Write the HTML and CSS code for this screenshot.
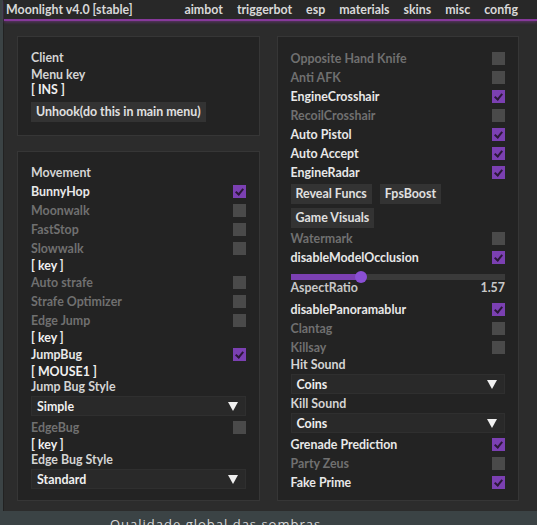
FILE: index.html
```html
<!DOCTYPE html>
<html>
<head>
<title>Moonlight</title>
<link rel="stylesheet" href="styles.css">
</head>
<body>
<div class="window">
    <div class="titlebar">
        <span class="title">Moonlight v4.0 [stable]</span>
        <nav class="tabs">
            <span>aimbot</span>
            <span>triggerbot</span>
            <span>esp</span>
            <span>materials</span>
            <span>skins</span>
            <span>misc</span>
            <span>config</span>
        </nav>
    </div>

    <div class="content">
        <div class="column">
            <div class="panel client">
                <div class="head">Client</div>
                <div class="line">Menu key</div>
                <div class="line key">[ INS ]</div>
                <div class="btnrow unhook"><span class="btn">Unhook(do this in main menu)</span></div>
            </div>

            <div class="panel movement">
                <div class="head">Movement</div>
                <div class="row on">BunnyHop<i class="box checked"></i></div>
                <div class="row">Moonwalk<i class="box"></i></div>
                <div class="row">FastStop<i class="box"></i></div>
                <div class="row">Slowwalk<i class="box"></i></div>
                <div class="line key">[ key ]</div>
                <div class="row">Auto strafe<i class="box"></i></div>
                <div class="row">Strafe Optimizer<i class="box"></i></div>
                <div class="row">Edge Jump<i class="box"></i></div>
                <div class="line key">[ key ]</div>
                <div class="row on">JumpBug<i class="box checked"></i></div>
                <div class="line key">[ MOUSE1 ]</div>
                <div class="line">Jump Bug Style</div>
                <div class="select">Simple<b class="arrow"></b></div>
                <div class="row">EdgeBug<i class="box"></i></div>
                <div class="line key">[ key ]</div>
                <div class="line">Edge Bug Style</div>
                <div class="select">Standard<b class="arrow"></b></div>
            </div>
        </div>

        <div class="column">
            <div class="panel misc">
                <div class="row">Opposite Hand Knife<i class="box"></i></div>
                <div class="row">Anti AFK<i class="box"></i></div>
                <div class="row on">EngineCrosshair<i class="box checked"></i></div>
                <div class="row">RecoilCrosshair<i class="box"></i></div>
                <div class="row on">Auto Pistol<i class="box checked"></i></div>
                <div class="row on">Auto Accept<i class="box checked"></i></div>
                <div class="row on">EngineRadar<i class="box checked"></i></div>
                <div class="btnrow first"><span class="btn">Reveal Funcs</span><span class="btn">FpsBoost</span></div>
                <div class="btnrow"><span class="btn">Game Visuals</span></div>
                <div class="row gap">Watermark<i class="box"></i></div>
                <div class="row on">disableModelOcclusion<i class="box checked"></i></div>
                <div class="slider">
                    <div class="fill" style="width: 70px"></div>
                    <div class="knob" style="left: 64px"></div>
                </div>
                <div class="line value">AspectRatio<span>1.57</span></div>
                <div class="row on after-slider">disablePanoramablur<i class="box checked"></i></div>
                <div class="row">Clantag<i class="box"></i></div>
                <div class="row">Killsay<i class="box"></i></div>
                <div class="line">Hit Sound</div>
                <div class="select">Coins<b class="arrow"></b></div>
                <div class="line">Kill Sound</div>
                <div class="select">Coins<b class="arrow"></b></div>
                <div class="row on">Grenade Prediction<i class="box checked"></i></div>
                <div class="row">Party Zeus<i class="box"></i></div>
                <div class="row on">Fake Prime<i class="box checked"></i></div>
            </div>
        </div>
    </div>
</div>
<div class="game">Qualidade global das sombras</div>
</body>
</html>
```

FILE: styles.css
```css
html, body{
    margin: 0;
    padding: 0;
}
body{
    background-color: #3b4345;
    font-family: "Lato", "Open Sans", sans-serif;
    font-size: 12.4px;
    font-weight: 700;
    color: #e4e4e4;
    width: 537px;
    height: 525px;
    overflow: hidden;
}

.window{
    margin-left: 3px;
    height: 511px;
    background-color: #2c2c2c;
    border-left: 1px solid #222;
}

.titlebar{
    height: 19px;
    display: flex;
    align-items: center;
    justify-content: space-between;
    padding: 0 19px 0 2px;
    background-color: #282828;
    border-bottom: 2px solid #86399a;
    box-shadow: 0 1px 3px rgba(150, 60, 170, 0.5);
    color: #d8d8d8;
}
.tabs{
    display: flex;
    gap: 14px;
}

.content{
    display: flex;
    gap: 17px;
    padding: 15px 18px 0 13px;
}
.column{
    width: 243px;
    display: flex;
    flex-direction: column;
    gap: 15px;
}

.panel{
    background-color: #232323;
    border: 1px solid #363636;
    padding: 12px 13px 0 13px;
    box-sizing: border-box;
}
.client{
    height: 100px;
}
.movement{
    height: 350px;
}
.misc{
    height: 465px;
}

.head{
    height: 18px;
    line-height: 18px;
    color: #d4d4d4;
}
.line{
    height: 15px;
    line-height: 15px;
    color: #d4d4d4;
}
.key{
    color: #f0f0f0;
}
.value{
    display: flex;
    justify-content: space-between;
    height: 14px;
    line-height: 14px;
    color: #c8c8c8;
}

.row{
    height: 19px;
    display: flex;
    align-items: center;
    justify-content: space-between;
    color: #707070;
}
.row.on{
    color: #e8e8e8;
}
.row.gap{
    margin-top: 1px;
}
.row.after-slider{
    margin-top: 5px;
}

.box{
    width: 13px;
    height: 13px;
    background-color: #4a4a4a;
    position: relative;
}
.box.checked{
    background-color: #7b40b2;
}
.box.checked::after{
    content: "";
    position: absolute;
    left: 4px;
    top: 2px;
    width: 3px;
    height: 6px;
    border-right: 2px solid #2b1838;
    border-bottom: 2px solid #2b1838;
    transform: rotate(40deg);
}

.btnrow{
    display: flex;
    gap: 8px;
    margin-top: 4px;
}
.btnrow.first{
    margin-top: 2px;
}
.btnrow.unhook{
    margin-top: 5px;
}
.btn{
    height: 20px;
    line-height: 20px;
    padding: 0 5px;
    background-color: #333333;
    color: #e0e0e0;
}

.select{
    height: 20px;
    margin: 2px 0 2px 0;
    padding: 0 5px;
    display: flex;
    align-items: center;
    justify-content: space-between;
    background-color: #292929;
    border: 1px solid #2f2f2f;
    box-sizing: border-box;
    color: #f0f0f0;
}
.arrow{
    width: 0;
    height: 0;
    border-left: 5px solid transparent;
    border-right: 5px solid transparent;
    border-top: 9px solid #f0f0f0;
    margin-right: 2px;
}

.slider{
    position: relative;
    height: 6px;
    margin: 7px 0 1px 0;
    background-color: #3a3a3a;
}
.fill{
    height: 6px;
    background-color: #7b40b2;
}
.knob{
    position: absolute;
    top: -3px;
    width: 12px;
    height: 12px;
    border-radius: 50%;
    background-color: #8a4fd4;
}

.game{
    padding-left: 110px;
    margin-top: 4px;
    font-family: "Open Sans", sans-serif;
    font-weight: 400;
    font-size: 13px;
    letter-spacing: 1px;
    color: #d8d8d8;
}
```
